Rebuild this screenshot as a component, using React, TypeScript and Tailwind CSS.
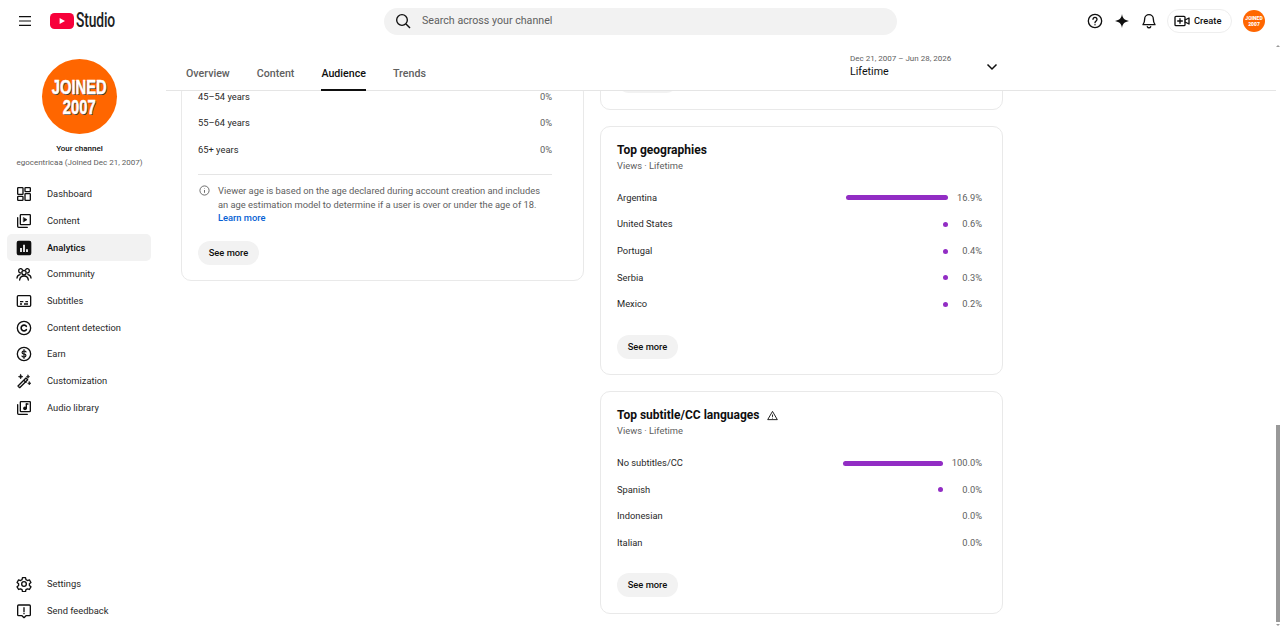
import type { ReactNode } from "react";

const Icon = ({ children, size = 16, className = "" }: { children: ReactNode; size?: number; className?: string }) => (
  <svg
    width={size}
    height={size}
    viewBox="0 0 24 24"
    fill="none"
    stroke="currentColor"
    strokeWidth="2"
    strokeLinecap="round"
    strokeLinejoin="round"
    className={`shrink-0 text-[#0f0f0f] ${className}`}
  >
    {children}
  </svg>
);

const navIcons: Record<string, ReactNode> = {
  Dashboard: (
    <>
      <rect x="2.500" y="2.500" width="8" height="10" rx="1" />
      <rect x="13.500" y="2.500" width="8" height="6" rx="1" />
      <rect x="2.500" y="15.500" width="8" height="6" rx="1" />
      <rect x="13.500" y="11.500" width="8" height="10" rx="1" />
    </>
  ),
  Content: (
    <>
      <rect x="6.500" y="2.500" width="15" height="15" rx="1" />
      <path d="M2.500 7v13a1.500 1.500 0 0 0 1.500 1.500h13" />
      <path d="M11.500 7l5 3-5 3z" fill="currentColor" strokeWidth="1" />
    </>
  ),
  Analytics: (
    <>
      <rect x="2" y="2" width="20" height="20" rx="2" fill="currentColor" />
      <path d="M7.500 12v6M12 7v11M16.500 14v4" stroke="#fff" strokeWidth="2.600" strokeLinecap="butt" />
    </>
  ),
  Community: (
    <>
      <circle cx="12" cy="10" r="3.200" />
      <path d="M5.500 21c.4-4 3-6 6.500-6s6.100 2 6.500 6" />
      <path d="M7 10.500a3.300 3.300 0 0 1-.5-6.500 3.200 3.200 0 0 1 3 1.300M17 10.500a3.300 3.300 0 0 0 .5-6.500 3.200 3.200 0 0 0-3 1.300" />
      <path d="M1.500 18c.2-3 2-4.800 4.500-5.200M22.500 18c-.2-3-2-4.800-4.500-5.200" />
    </>
  ),
  Subtitles: (
    <>
      <rect x="2" y="4" width="20" height="16" rx="1.500" />
      <path d="M6 13h5M14 13h4M6 16.500h3M12 16.500h6" strokeLinecap="butt" />
    </>
  ),
  "Content detection": (
    <>
      <circle cx="12" cy="12" r="10" />
      <path d="M15.500 9.500a4.300 4.300 0 1 0 0 5" strokeWidth="2.400" />
    </>
  ),
  Earn: (
    <>
      <circle cx="12" cy="12" r="10" />
      <path d="M15 9a2.500 2 0 0 0-2.500-1.500h-1a2.300 2.200 0 0 0 0 4.500h1a2.300 2.200 0 0 1 0 4.500h-1A2.500 2 0 0 1 9 15M12 5.500v13" strokeWidth="1.800" />
    </>
  ),
  Customization: (
    <>
      <path d="M3 21l12-12 2.500 2.500-12 12z" transform="translate(0 -1.500)" />
      <path d="M12.500 11.500l2.500 2.500" />
      <path d="M7 2l1 2.500L10.500 5.500 8 6.500 7 9 6 6.500 3.500 5.500 6 4.500zM18 3l.8 1.700 1.700.8-1.700.8L18 8l-.8-1.700-1.700-.8 1.700-.8zM20 13l.8 1.700 1.700.8-1.700.8L20 18l-.8-1.700-1.700-.8 1.700-.8z" fill="currentColor" strokeWidth="0.800" />
    </>
  ),
  "Audio library": (
    <>
      <rect x="6.500" y="2.500" width="15" height="15" rx="1" />
      <path d="M2.500 7v13a1.500 1.500 0 0 0 1.500 1.500h13" />
      <path d="M15.500 6v6.500" />
      <circle cx="13.500" cy="12.500" r="1.800" fill="currentColor" />
      <path d="M15.500 6h2.500" />
    </>
  ),
  Settings: (
    <>
      <path d="M9.700 2.500h4.600l.6 3 2.300 1.300 2.900-1 2.300 4-2.300 2v2.400l2.300 2-2.300 4-2.900-1-2.300 1.300-.6 3H9.700l-.6-3-2.300-1.300-2.900 1-2.300-4 2.300-2v-2.400l-2.300-2 2.300-4 2.900 1 2.300-1.300z" />
      <circle cx="12" cy="12" r="3.500" />
    </>
  ),
  "Send feedback": (
    <>
      <path d="M4 3h16a1.500 1.500 0 0 1 1.500 1.500v13A1.500 1.500 0 0 1 20 19h-5l-3 3-3-3H4a1.500 1.500 0 0 1-1.500-1.500v-13A1.500 1.500 0 0 1 4 3z" />
      <path d="M12 7v6M12 15.500v.5" />
    </>
  ),
};

const NavItem = ({ label, active = false }: { label: string; active?: boolean }) => (
  <div
    className={`mr-[15px] ml-[7px] flex h-[26.67px] items-center rounded-[5px] pl-[9px] ${
      active ? "bg-[#f2f2f2] font-medium text-[#0f0f0f]" : "text-[#282828]"
    }`}
  >
    <Icon>{navIcons[label]}</Icon>
    <span className="ml-[15px] text-[9.33px]">{label}</span>
  </div>
);

const SeeMore = () => (
  <button className="flex h-[24px] w-[61px] items-center justify-center rounded-full bg-[#f2f2f2] text-[9.33px] font-medium text-[#0f0f0f]">
    See more
  </button>
);

const Row = ({ label, value, bar, col }: { label: string; value: string; bar?: number; col: number }) => (
  <div className="flex h-[26.67px] items-center text-[9.33px] text-[#282828]">
    <span className="flex-1">{label}</span>
    {bar !== undefined && (
      <div
        className={`h-[5px] rounded-full bg-[#922dc4] ${bar > 0 ? "" : "w-[5px]"}`}
        style={bar > 0 ? { width: bar } : undefined}
      />
    )}
    <span className="text-right text-[#606060]" style={{ width: col }}>
      {value}
    </span>
  </div>
);

const CardHead = ({ title, children }: { title: string; children?: ReactNode }) => (
  <>
    <div className="flex h-[16px] items-center gap-[8px] text-[12px] font-bold text-[#0f0f0f]">
      {title}
      {children}
    </div>
    <div className="mt-[2px] mb-[12.500px] h-[12px] text-[9.33px] leading-[12px] text-[#606060]">Views · Lifetime</div>
  </>
);

const card = "rounded-[10px] border border-[#e9e9e9] bg-white";

export default function App() {
  return (
    <div className="flex h-[630px] w-[1280px] flex-col overflow-hidden bg-white font-['Roboto',sans-serif]">
      {/* Top bar */}
      <header className="flex h-[42px] shrink-0 items-center">
        <div className="flex w-[384px] items-center pl-[19px]">
          <svg width="12" height="10" viewBox="0 0 12 10" className="shrink-0">
            <path d="M0 .6h12M0 5h12M0 9.400h12" stroke="#0f0f0f" strokeWidth="1.100" />
          </svg>
          <svg width="24" height="16" viewBox="0 0 24 16" className="ml-[19px] shrink-0">
            <rect width="24" height="16" rx="4.500" fill="#f7003a" />
            <path d="M9.600 5l5.400 3-5.400 3z" fill="#fff" />
          </svg>
          <span className="ml-[1.500px] w-[40px] origin-left scale-x-[0.71] text-[19.500px] leading-none font-medium tracking-[-0.2px] text-[#212121]">
            Studio
          </span>
        </div>
        <div className="flex h-[27px] w-[513px] items-center rounded-full bg-[#f2f2f2] pl-[11px]">
          <svg width="16" height="16" viewBox="0 0 24 24" fill="none" stroke="#0f0f0f" strokeWidth="2">
            <circle cx="10.500" cy="10.500" r="8" />
            <path d="M16.500 16.500l6 6" />
          </svg>
          <span className="ml-[11px] text-[10.67px] text-[#606060]">Search across your channel</span>
        </div>
        <div className="ml-[190px] flex items-center">
          <Icon size={16}>
            <circle cx="12" cy="12" r="10" />
            <path d="M9 9.500a3 3 0 1 1 4.500 2.600c-1 .6-1.500 1.200-1.500 2.400M12 17.500v.2" />
          </Icon>
          <svg width="14" height="14" viewBox="0 0 24 24" className="ml-[12px] shrink-0">
            <path d="M12 0c1 7 4 10.500 12 12-8 1.500-11 5-12 12-1-7-4-10.500-12-12 8-1.500 11-5 12-12z" fill="#0f0f0f" />
          </svg>
          <Icon size={16} className="ml-[12px]">
            <path d="M12 2.500a6.500 6.500 0 0 0-6.500 6.500c0 4.500-1 6.500-2.500 8.500h18c-1.500-2-2.500-4-2.500-8.500A6.500 6.500 0 0 0 12 2.500z" />
            <path d="M9.500 20.500a2.700 2.700 0 0 0 5 0" />
          </Icon>
          <div className="ml-[10px] flex h-[24px] w-[65px] items-center rounded-full border border-[#eeeeee] pl-[6px]">
            <Icon size={16}>
              <rect x="1.500" y="5" width="15" height="14" rx="1.500" />
              <path d="M16.500 10.500l6-3v9l-6-3M9 8.500v7M5.500 12h7" />
            </Icon>
            <span className="ml-[4px] text-[9.33px] font-medium text-[#0f0f0f]">Create</span>
          </div>
          <div className="ml-[11px] flex size-[22px] items-center justify-center rounded-full bg-[#ff6600] text-center text-[5px] leading-[6px] font-black text-white">
            JOINED
            <br />
            2007
          </div>
        </div>
      </header>

      <div className="flex min-h-0 flex-1">
        {/* Sidebar */}
        <aside className="flex w-[166px] shrink-0 flex-col justify-between pb-[6px]">
          <div>
            <div className="flex flex-col items-center pr-[7px]">
              <div className="mt-[17px] flex size-[75px] items-center justify-center rounded-full bg-[#ff6600] font-['Liberation_Sans',sans-serif] font-bold text-white">
                <span className="scale-x-[0.74] text-center text-[20px] leading-[20px] [-webkit-text-stroke:0.4px_white] [text-shadow:1px_1px_0_#3a3a3a]">
                  JOINED
                  <br />
                  2007
                </span>
              </div>
              <div className="mt-[9px] text-[8px] leading-[12px] font-medium text-[#0f0f0f]">Your channel</div>
              <div className="mt-[2px] text-[8px] leading-[12px] text-[#606060]">egocentricaa (Joined Dec 21, 2007)</div>
            </div>
            <nav className="mt-[12px]">
              <NavItem label="Dashboard" />
              <NavItem label="Content" />
              <NavItem label="Analytics" active />
              <NavItem label="Community" />
              <NavItem label="Subtitles" />
              <NavItem label="Content detection" />
              <NavItem label="Earn" />
              <NavItem label="Customization" />
              <NavItem label="Audio library" />
            </nav>
          </div>
          <div>
            <NavItem label="Settings" />
            <NavItem label="Send feedback" />
          </div>
        </aside>

        {/* Main */}
        <main className="flex min-w-0 flex-1 flex-col">
          <div className="flex h-[49px] shrink-0 border-b border-[#e5e5e5]">
            <div className="flex w-[684px] items-end gap-[27px] pl-[20px] text-[10.67px] font-medium text-[#606060]">
              <span className="flex h-[32px] items-start pt-[8px]">Overview</span>
              <span className="flex h-[32px] items-start pt-[8px]">Content</span>
              <span className="-mb-px flex h-[33px] items-start border-b-2 border-[#0f0f0f] pt-[8px] text-[#0f0f0f]">Audience</span>
              <span className="flex h-[32px] items-start pt-[8px]">Trends</span>
            </div>
            <div className="flex w-[162px] items-center pb-[2px]">
              <div className="flex-1">
                <div className="text-[8px] leading-[11px] text-[#606060]">Dec 21, 2007 – Jun 28, 2026</div>
                <div className="mt-[1px] text-[10.67px] leading-[13px] text-[#0f0f0f]">Lifetime</div>
              </div>
              <svg width="12" height="8" viewBox="0 0 12 8" className="mt-[4px] mr-[14px]" fill="none" stroke="#0f0f0f" strokeWidth="1.500">
                <path d="M1.500 1.500L6 6l4.500-4.500" />
              </svg>
            </div>
          </div>

          <div className="flex min-h-0 flex-1 gap-[16px] overflow-hidden pl-[15px]">
            {/* Age column */}
            <div className="-mt-[8.700px] w-[403px] shrink-0 self-start">
              <div className={`${card} pr-[31px] pb-[15px] pl-[16px]`}>
                <Row label="45–54 years" value="0%" col={30} />
                <Row label="55–64 years" value="0%" col={30} />
                <Row label="65+ years" value="0%" col={30} />
                <div className="mt-[11px] border-t border-[#e5e5e5] pt-[9px]">
                  <div className="flex">
                    <svg width="11" height="11" viewBox="0 0 24 24" fill="none" stroke="#606060" strokeWidth="2" className="mt-px ml-px shrink-0">
                      <circle cx="12" cy="12" r="10" />
                      <path d="M12 11v6M12 7v1" />
                    </svg>
                    <p className="ml-[8px] text-[9.33px] leading-[13.33px] text-[#606060]">
                      Viewer age is based on the age declared during account creation and includes an age estimation model to determine if a user is over or under the age of 18.{" "}
                      <span className="block font-medium text-[#065fd4]">Learn more</span>
                    </p>
                  </div>
                </div>
                <div className="mt-[16.500px]">
                  <SeeMore />
                </div>
              </div>
            </div>

            {/* Right column */}
            <div className="-mt-[23px] flex w-[403px] shrink-0 flex-col gap-[16px] self-start">
              <div className={`${card} pb-[16px] pl-[16px]`}>
                <div className="h-[24px] w-[61px] rounded-full bg-[#f2f2f2]" />
              </div>
              <div className={`${card} pt-[15px] pr-[20px] pb-[15.500px] pl-[16px]`}>
                <CardHead title="Top geographies" />
                <Row label="Argentina" value="16.9%" bar={102} col={34} />
                <Row label="United States" value="0.6%" bar={0} col={34} />
                <Row label="Portugal" value="0.4%" bar={0} col={34} />
                <Row label="Serbia" value="0.3%" bar={0} col={34} />
                <Row label="Mexico" value="0.2%" bar={0} col={34} />
                <div className="mt-[17px]">
                  <SeeMore />
                </div>
              </div>
              <div className={`${card} pt-[15px] pr-[20px] pb-[15.500px] pl-[16px]`}>
                <CardHead title="Top subtitle/CC languages">
                  <svg width="11" height="11" viewBox="0 0 24 24" fill="none" stroke="#0f0f0f" strokeWidth="2" strokeLinejoin="round">
                    <path d="M12 3l10.500 18h-21z" />
                    <path d="M12 10v5M12 17v1.500" />
                  </svg>
                </CardHead>
                <Row label="No subtitles/CC" value="100.0%" bar={100} col={39} />
                <Row label="Spanish" value="0.0%" bar={0} col={39} />
                <Row label="Indonesian" value="0.0%" col={39} />
                <Row label="Italian" value="0.0%" col={39} />
                <div className="mt-[17px]">
                  <SeeMore />
                </div>
              </div>
            </div>
          </div>
        </main>

        {/* Scrollbar */}
        <div className="flex w-[4px] shrink-0 flex-col items-center pt-[3px] pb-[2px]">
          <div className="size-0 border-x-[2px] border-b-[2px] border-x-transparent border-b-[#999]" />
          <div className="mt-[378px] h-[197px] w-full bg-[#999]" />
          <div className="mt-[2px] size-0 border-x-[2px] border-t-[2px] border-x-transparent border-t-[#999]" />
        </div>
      </div>
    </div>
  );
}
